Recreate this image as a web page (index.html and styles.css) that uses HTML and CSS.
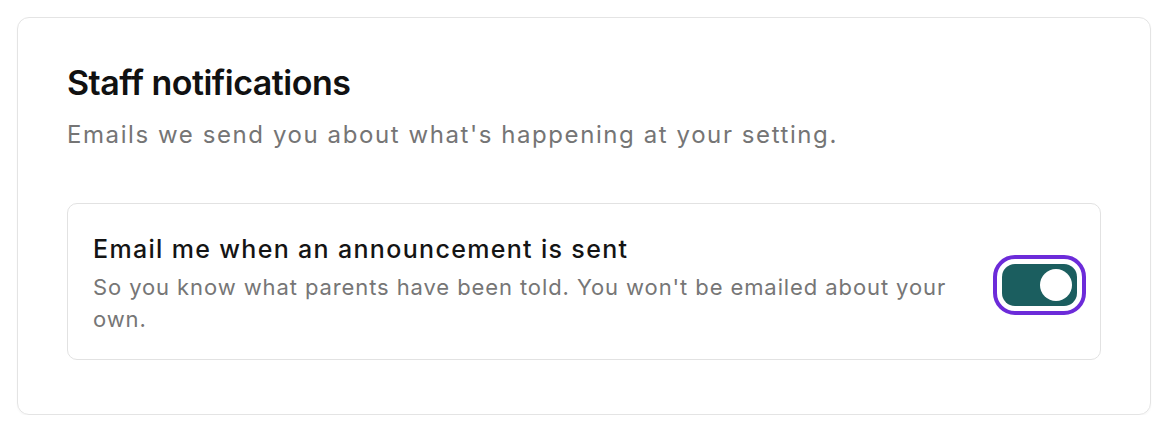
FILE: index.html
```html
<!DOCTYPE html>
<html lang="en">
<head>
<meta charset="utf-8">
<title>Staff notifications</title>
<link rel="stylesheet" href="styles.css">
</head>
<body>
<section class="card">
  <h2 class="card-title">Staff notifications</h2>
  <p class="card-subtitle">Emails we send you about what's happening at your setting.</p>
  <div class="setting">
    <div class="setting-text">
      <div class="setting-title">Email me when an announcement is sent</div>
      <div class="setting-desc">So you know what parents have been told. You won't be emailed about your own.</div>
    </div>
    <button class="toggle is-on" role="switch" aria-checked="true" aria-label="Email me when an announcement is sent">
      <span class="toggle-knob"></span>
    </button>
  </div>
</section>
</body>
</html>
```

FILE: styles.css
```css
* { box-sizing: border-box; }

html, body {
  margin: 0;
  background: #ffffff;
}

body {
  padding: 17px 17px 0 17px;
  font-family: Inter, "Noto Sans", "Liberation Sans", sans-serif;
  color: #141414;
}

.card {
  width: 1134px;
  height: 398px;
  border: 1px solid #e4e4e4;
  border-radius: 12px;
  padding: 45px 49px 0 49px;
  box-shadow: 0 1px 2px rgba(0, 0, 0, 0.04);
}

.card-title {
  margin: 0;
  font-size: 34px;
  line-height: 40px;
  font-weight: 600;
  color: #111111;
  letter-spacing: -0.5px;
}

.card-subtitle {
  margin: 17px 0 0 0;
  font-size: 24px;
  line-height: 30px;
  font-weight: 400;
  letter-spacing: 1.58px;
  color: #757575;
}

.setting {
  margin-top: 53px;
  display: flex;
  align-items: center;
  gap: 40px;
  border: 1px solid #e2e2e2;
  border-radius: 10px;
  padding: 30px 23px 24px 25px;
}

.setting-text {
  flex: 1;
  min-width: 0;
}

.setting-title {
  font-size: 25px;
  line-height: 30px;
  font-weight: 500;
  letter-spacing: 1.33px;
  color: #141414;
}

.setting-desc {
  margin-top: 7px;
  font-size: 22px;
  line-height: 32px;
  letter-spacing: 0.9px;
  color: #767676;
}

.toggle {
  flex: none;
  position: relative;
  width: 75px;
  height: 42px;
  margin: 0;
  padding: 0;
  border: none;
  border-radius: 13px;
  background: #1b5e5f;
  outline: 4px solid #6c2bd9;
  outline-offset: 5px;
  cursor: pointer;
}

.toggle-knob {
  position: absolute;
  top: 5px;
  right: 5px;
  width: 32px;
  height: 32px;
  border-radius: 50%;
  background: #ffffff;
}
```
